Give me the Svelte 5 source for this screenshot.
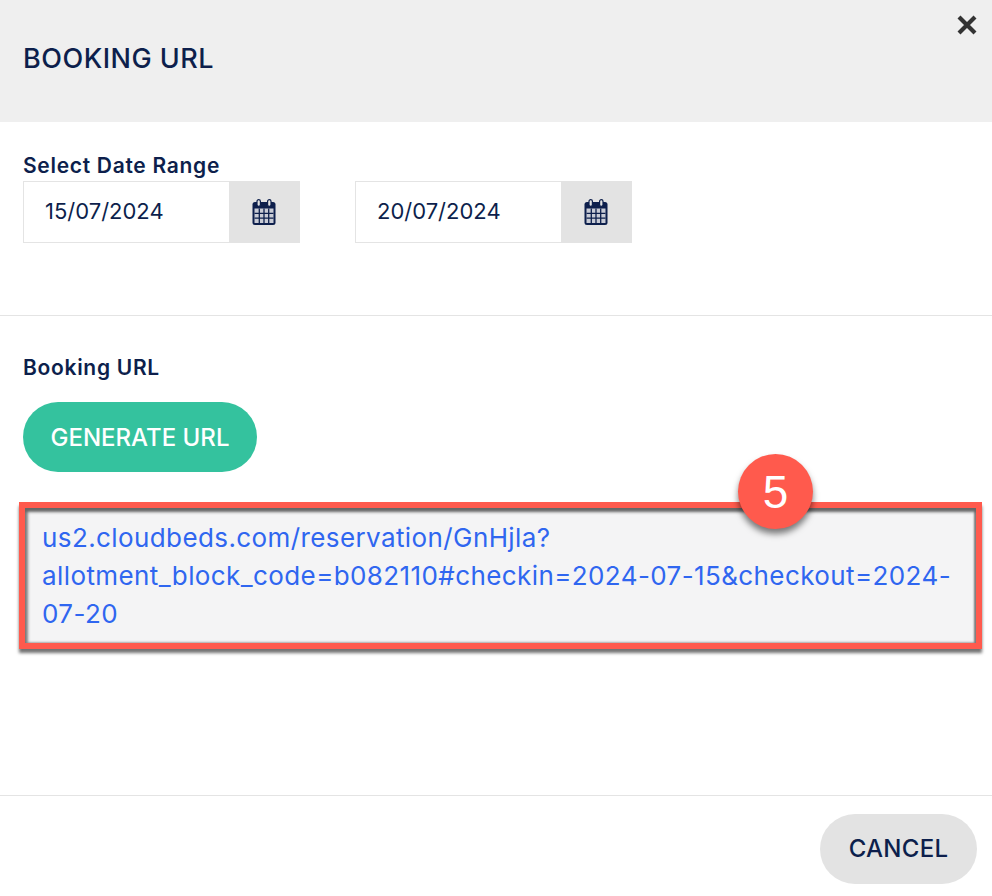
<script>
  let from = "15/07/2024";
  let to = "20/07/2024";
  const url = "us2.cloudbeds.com/reservation/GnHjla?allotment_block_code=b082110#checkin=2024-07-15&checkout=2024-07-20";
</script>

<div class="modal">
  <header class="head">
    <h1>BOOKING URL</h1>
    <button class="close" aria-label="Close">
      <svg width="22" height="22" viewBox="0 0 22 22"><path d="M3 3 L19 19 M19 3 L3 19" stroke="#333" stroke-width="4.2" fill="none"/></svg>
    </button>
  </header>

  <section class="dates">
    <div class="label">Select Date Range</div>
    <div class="range">
      {#each [from, to] as d}
        <div class="date">
          <span class="value">{d}</span>
          <span class="addon">
            <svg width="24" height="26" viewBox="0 0 24 26">
              <rect x="0.5" y="3" width="23" height="23" rx="2.5" fill="#0d1f4c"/>
              <rect x="2.5" y="9.5" width="19" height="14.5" fill="#c9ccd6"/>
              <path d="M7.3 9.5v14.5M12 9.5v14.5M16.7 9.5v14.5M2.5 14.3h19M2.5 19.1h19" stroke="#0d1f4c" stroke-width="1.3"/>
              <rect x="5" y="0.6" width="3.4" height="6.8" rx="1.7" fill="#e3e3e3" stroke="#0d1f4c" stroke-width="1.2"/>
              <rect x="15.6" y="0.6" width="3.4" height="6.8" rx="1.7" fill="#e3e3e3" stroke="#0d1f4c" stroke-width="1.2"/>
            </svg>
          </span>
        </div>
      {/each}
    </div>
  </section>

  <section class="booking">
    <div class="label">Booking URL</div>
    <button class="generate">GENERATE URL</button>
    <div class="url-wrap">
      <div class="url">{url}</div>
      <div class="badge">5</div>
    </div>
  </section>

  <footer class="foot">
    <button class="cancel">CANCEL</button>
  </footer>
</div>

<style>
  :global(body) {
    margin: 0;
    background: #fff;
  }
  .modal {
    width: 992px;
    height: 896px;
    display: flex;
    flex-direction: column;
    font-family: Inter, "Open Sans", sans-serif;
    color: #0d1f4c;
    overflow: hidden;
  }
  .head {
    height: 122px;
    box-sizing: border-box;
    background: #efefef;
    padding: 0 23px 6px;
    display: flex;
    align-items: center;
    position: relative;
  }
  h1 {
    margin: 0;
    font-size: 27px;
    font-weight: 500;
    letter-spacing: 0.5px;
  }
  .close {
    position: absolute;
    top: 14px;
    right: 14px;
    border: 0;
    padding: 0;
    background: none;
    display: flex;
  }
  .dates {
    height: 194px;
    box-sizing: border-box;
    padding: 28px 23px 0;
    border-bottom: 1px solid #e4e4e4;
  }
  .label {
    font-size: 21px;
    font-weight: 600;
    line-height: 31px;
    letter-spacing: 0.7px;
  }
  .range {
    display: flex;
    gap: 55px;
  }
  .date {
    width: 277px;
    height: 62px;
    box-sizing: border-box;
    border: 1px solid #e4e4e4;
    display: flex;
    align-items: center;
  }
  .value {
    flex: 1;
    padding: 0 0 2px 21px;
    font-size: 22px;
  }
  .addon {
    width: 71px;
    height: 62px;
    box-sizing: border-box;
    padding-right: 2px;
    margin-right: -1px;
    background: #e3e3e3;
    display: flex;
    align-items: center;
    justify-content: center;
  }
  .booking {
    flex: 1;
    padding: 36px 23px 0;
  }
  .generate {
    display: block;
    margin-top: 19px;
    width: 234px;
    height: 70px;
    border: 0;
    border-radius: 35px;
    background: #34c29e;
    color: #fff;
    font: 500 24px Inter, "Open Sans", sans-serif;
  }
  .url-wrap {
    position: relative;
    margin: 30px -13px 0 -4px;
  }
  .url {
    height: 147px;
    box-sizing: border-box;
    border: 6px solid #ff5a4d;
    background: #f4f4f5;
    padding: 11px 17px 0;
    font-size: 26px;
    line-height: 38px;
    letter-spacing: 0.4px;
    color: #2f66f0;
    overflow-wrap: anywhere;
    box-shadow: inset 0 4px 3px #666, inset 3px 0 3px #888, inset -2px 0 2px #888, 0 4px 3px rgba(0, 0, 0, 0.55);
  }
  .badge {
    position: absolute;
    top: -48px;
    left: 719px;
    width: 75px;
    height: 75px;
    border-radius: 50%;
    background: #ff5a4d;
    color: #fff;
    font-size: 46px;
    font-family: "Liberation Sans", sans-serif;
    display: flex;
    align-items: center;
    justify-content: center;
    box-shadow: 0 5px 6px rgba(0, 0, 0, 0.5);
  }
  .foot {
    height: 101px;
    box-sizing: border-box;
    border-top: 1px solid #e4e4e4;
    padding: 18px 15px 0 0;
    display: flex;
    justify-content: flex-end;
    align-items: flex-start;
  }
  .cancel {
    width: 157px;
    height: 70px;
    border: 0;
    border-radius: 35px;
    padding-bottom: 2px;
    background: #e3e3e3;
    color: #0d1f4c;
    font: 500 24px Inter, "Open Sans", sans-serif;
    letter-spacing: 0.3px;
  }
</style>
